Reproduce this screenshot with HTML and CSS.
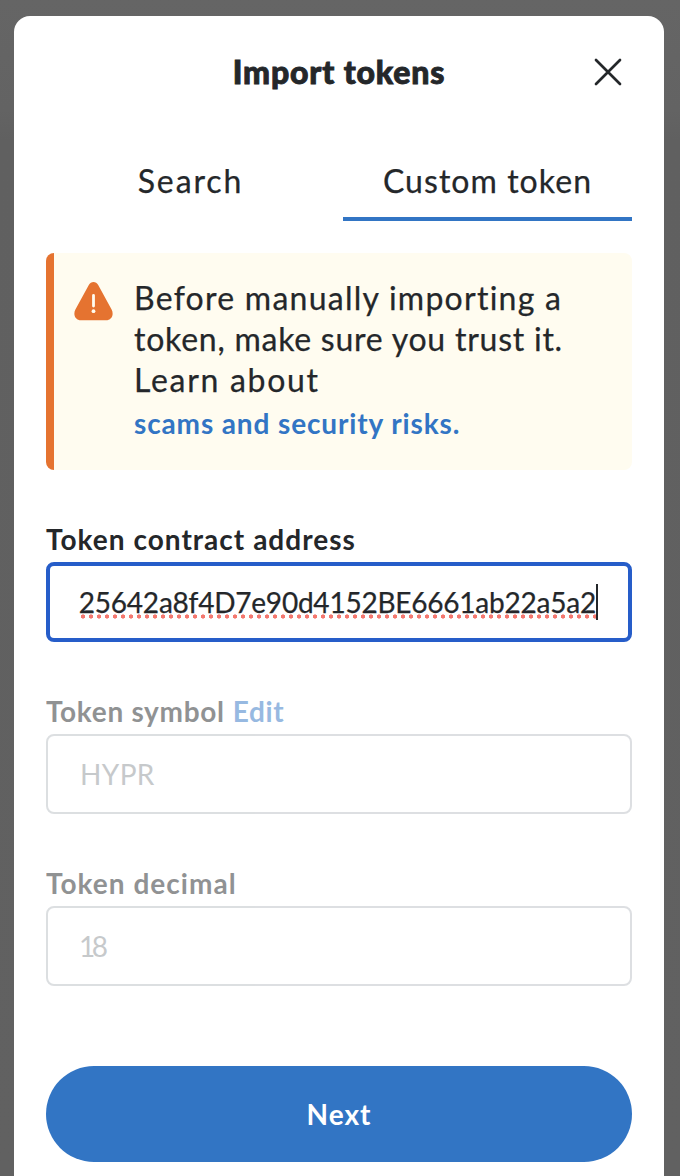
FILE: index.html
```html
<!DOCTYPE html>
<html lang="en">
<head>
<meta charset="utf-8">
<title>Import tokens</title>
<link rel="stylesheet" href="styles.css">
</head>
<body>
<main class="modal">
  <header class="modal-header">
    <h1 class="title">Import tokens</h1>
    <button class="close" aria-label="Close">
      <svg width="28" height="28" viewBox="0 0 28 28"><path d="M2 2 26 26M26 2 2 26"/></svg>
    </button>
  </header>
  <nav class="tabs">
    <a class="tab"><span class="tab-search">Search</span></a>
    <a class="tab tab-active"><span class="tab-custom">Custom token</span></a>
  </nav>
  <section class="notice">
    <svg class="warning" width="40" height="40" viewBox="0 0 40 40">
      <path class="warning-shape" d="M14.800 4C16.800 0 22.200 0 24.200 4L37.600 28.600C40.300 33.900 37.500 39.200 32 39.200H7C1.500 39.200-1.300 33.900 1.400 28.600Z"/>
      <path class="warning-mark" d="M19.500 14.500V25"/>
      <circle class="warning-dot" cx="19.500" cy="30.200" r="1.900"/>
    </svg>
    <div class="notice-text">
      <p class="line line-1">Before manually importing a</p>
      <p class="line line-2">token, make sure you trust it.</p>
      <p class="line line-3">Learn about</p>
      <a class="link">scams and security risks.</a>
    </div>
  </section>
  <form class="form">
    <div class="field">
      <label class="label label-address">Token contract address</label>
      <div class="input input-focus"><div class="value"><span class="address">25642a8f4D7e90d4152BE6661ab22a5a2</span></div><i class="caret"></i></div>
    </div>
    <div class="field disabled">
      <label class="label"><span class="label-symbol">Token symbol</span><a class="edit">Edit</a></label>
      <div class="input"><span class="placeholder symbol">HYPR</span></div>
    </div>
    <div class="field disabled">
      <label class="label label-decimal">Token decimal</label>
      <div class="input"><span class="placeholder decimal">18</span></div>
    </div>
    <button class="next" type="button">Next</button>
  </form>
</main>
</body>
</html>
```

FILE: styles.css
```css
* { box-sizing: border-box; margin: 0; }
body {
  height: 1176px;
  overflow: hidden;
  padding: 16px 16px 0 14px;
  background: linear-gradient(#656565 0, #636363 110px, #606060 140px, #616161 100%);
  color: #24272a;
  font-family: Lato, "Open Sans", sans-serif;
}
button { border: 0; padding: 0; font: inherit; }
.modal { height: 1160px; padding: 0 32px; border-radius: 16px 16px 0 0; background: #fff; }
.modal-header {
  display: grid;
  grid-template-columns: 48px 1fr 48px;
  align-items: center;
  height: 112px;
}
.title { grid-column: 2; text-align: center; font-size: 32px; line-height: 40px; font-weight: 900; letter-spacing: .85px; -webkit-text-stroke: .9px #24272a; }
.close { display: grid; place-items: center; height: 48px; background: none; }
.close path { stroke: #24272a; stroke-width: 2.7; stroke-linecap: round; fill: none; }
.tabs { display: flex; height: 93px; }
.tab {
  flex: 1;
  display: flex;
  justify-content: center;
  padding-top: 33px;
  font-size: 32px;
  line-height: 40px;
  border-bottom: 4px solid transparent;
}
.tab, .line { -webkit-text-stroke: .25px #24272a; }
.tab + .tab { margin-left: 8px; }
.tab-search { letter-spacing: 1.9px; }
.tab-custom { letter-spacing: 1.05px; }
.tab-active { border-color: #3275c4; }
.notice {
  display: flex;
  gap: 20px;
  height: 217px;
  margin-top: 32px;
  padding: 24px 20px;
  border-left: 8px solid #e57330;
  border-radius: 8px;
  background: #fffcf0;
}
.warning { flex: none; margin-top: 4px; }
.warning-shape { fill: #e57330; }
.warning-mark { stroke: #fffcf0; stroke-width: 2.8; stroke-linecap: round; }
.warning-dot { fill: #fffcf0; }
.notice-text { white-space: nowrap; }
.line { font-size: 32px; line-height: 41px; }
.line-1 { letter-spacing: 1.25px; }
.line-2 { letter-spacing: .76px; }
.line-3 { letter-spacing: 1.7px; }
.link { display: block; margin-top: 3px; font-size: 28px; line-height: 40px; font-weight: 700; letter-spacing: .87px; color: #3275c4; }
.form { padding-top: 48px; }
.field { height: 172px; }
.label { display: flex; gap: 8px; height: 44px; padding-top: 3px; font-size: 28px; line-height: 36px; font-weight: 700; white-space: nowrap; }
.label-address { letter-spacing: 1.02px; }
.label-symbol { letter-spacing: .68px; }
.label-decimal { letter-spacing: 1.02px; }
.edit { letter-spacing: .7px; color: #3275c4; }
.disabled .label, .disabled .input { opacity: .5; }
.input {
  display: flex;
  align-items: center;
  height: 80px;
  padding: 0 32px;
  border: 2px solid #bbc0c5;
  border-radius: 8px;
  font-size: 28px;
}
.input-focus { border: 4px solid #265dc9; padding: 0 29px; }
.value {
  width: 517px;
  height: 40px;
  display: flex;
  justify-content: flex-end;
  line-height: 40px;
  white-space: nowrap;
  background: radial-gradient(circle, #f4786f 1.8px, transparent 2.4px) 0 32px / 8px 5px repeat-x;
}
.address { letter-spacing: -.22px; -webkit-text-stroke: .25px #24272a; }
.caret { width: 2px; height: 36px; background: #24272a; }
.placeholder { color: #8f9499; }
.symbol { letter-spacing: .4px; }
.decimal { margin-left: -1px; letter-spacing: -3.5px; }
.next { display: block; width: 100%; height: 96px; margin-top: 32px; border-radius: 48px; background: #3275c4; color: #fff; font-size: 28px; font-weight: 700; letter-spacing: 1px; }
```
